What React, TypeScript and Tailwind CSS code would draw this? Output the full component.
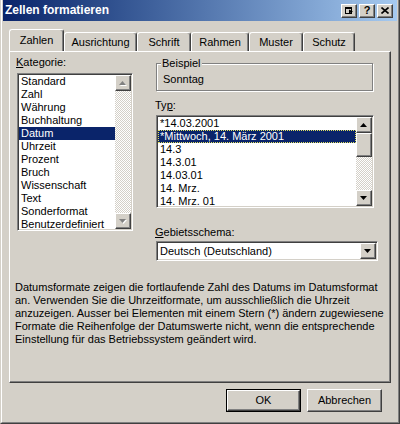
import React from "react";

const raised =
  "border border-t-white border-l-white border-r-[#404040] border-b-[#404040] shadow-[inset_-1px_-1px_0_#808080] bg-[#d4d0c8]";
const sunken =
  "border border-t-[#808080] border-l-[#808080] border-r-white border-b-white shadow-[inset_1px_1px_0_#404040,inset_-1px_-1px_0_#d4d0c8]";
const track =
  "bg-[image:repeating-conic-gradient(#ffffff_0_25%,#d4d0c8_0_50%)] bg-[length:2px_2px]";

function Arrow({ up, disabled }: { up?: boolean; disabled?: boolean }) {
  const pts = up ? "3.5,0 7,4 0,4" : "0,0 7,0 3.5,4";
  return (
    <svg width="8" height="5" viewBox="0 0 8 5" className="block">
      {disabled && <polygon points={pts} fill="#ffffff" transform="translate(1,1)" />}
      <polygon points={pts} fill={disabled ? "#808080" : "#000000"} />
    </svg>
  );
}

function ScrollBtn({ up, disabled }: { up?: boolean; disabled?: boolean }) {
  return (
    <div className={`${raised} w-[16px] h-[16px] flex items-center justify-center shrink-0`}>
      <Arrow up={up} disabled={disabled} />
    </div>
  );
}

const kategorien = [
  "Standard",
  "Zahl",
  "Währung",
  "Buchhaltung",
  "Datum",
  "Uhrzeit",
  "Prozent",
  "Bruch",
  "Wissenschaft",
  "Text",
  "Sonderformat",
  "Benutzerdefiniert",
];

const typen = [
  "*14.03.2001",
  "*Mittwoch, 14. März 2001",
  "14.3",
  "14.3.01",
  "14.03.01",
  "14. Mrz.",
  "14. Mrz. 01",
];

const tabs = [
  { name: "Zahlen", w: "w-[55px]" },
  { name: "Ausrichtung", w: "w-[73px]" },
  { name: "Schrift", w: "w-[54px]" },
  { name: "Rahmen", w: "w-[58px]" },
  { name: "Muster", w: "w-[54px]" },
  { name: "Schutz", w: "w-[52px]" },
];

export default function App() {
  return (
    <div className="w-[400px] h-[424px] bg-[#d4d0c8] font-['Liberation_Sans',Arial,sans-serif] text-[11px] leading-[13px] text-black flex flex-col border-l border-r border-b border-l-[#d4d0c8] border-r-[#404040] border-b-[#404040] overflow-hidden">
      <div className="flex-1 flex flex-col border-l border-r border-b border-l-white border-r-[#808080] border-b-[#808080] px-[1px]">
        {/* Title bar */}
        <div className="h-[21px] shrink-0 flex items-center bg-gradient-to-r from-[#0a246a] to-[#a6caf0] pl-[2px] pr-[4px]">
          <span className="font-bold text-white text-[12px] whitespace-nowrap">Zellen formatieren</span>
          <div className="ml-auto flex items-center">
            <div className={`${raised} w-[16px] h-[14px] flex items-center justify-center`}>
              <svg width="9" height="7" viewBox="0 0 9 7" className="block">
                <rect x="0.5" y="0.5" width="6" height="6" fill="none" stroke="#000" />
                <rect x="0.5" y="0.5" width="6" height="1.5" fill="#000" />
                <polygon points="4,2.5 8,4.5 4,6.5" fill="#000" />
              </svg>
            </div>
            <div className={`${raised} w-[16px] h-[14px] flex items-center justify-center ml-[2px] font-bold text-[11px] leading-[11px]`}>
              ?
            </div>
            <div className={`${raised} w-[16px] h-[14px] flex items-center justify-center ml-[2px]`}>
              <svg width="8" height="7" viewBox="0 0 8 7" className="block">
                <path d="M0.5 0.5 L7.5 6.5 M7.5 0.5 L0.5 6.5" stroke="#000" strokeWidth="1.6" />
              </svg>
            </div>
          </div>
        </div>

        {/* Tabs */}
        <div className="mt-[9px] ml-[6px] h-[21px] flex items-end relative z-10">
          {tabs.map((t, i) => (
            <div
              key={t.name}
              className={`${t.w} ${
                i === 0 ? "h-[22px] bg-[#d4d0c8] pb-[1px]" : "h-[19px] pt-[1px]"
              } flex items-center justify-center border-t border-l border-r border-t-white border-l-white border-r-[#404040] shadow-[inset_-1px_0_0_#808080] rounded-t-[3px] whitespace-nowrap`}
            >
              {t.name}
            </div>
          ))}
        </div>

        {/* Panel */}
        <div className="ml-[6px] w-[382px] h-[332px] shrink-0 border border-t-white border-l-white border-r-[#404040] border-b-[#404040] shadow-[inset_-1px_-1px_0_#808080] flex flex-col">
          <div className="flex pl-[7px]">
            {/* Left column */}
            <div className="w-[116px] pt-[4px] flex flex-col">
              <div className="h-[13px] -ml-[1px]">
                <span className="underline">K</span>ategorie:
              </div>
              <div className={`${sunken} bg-white mt-[4px] h-[158px] p-[1px] flex`}>
                <div className="flex-1 overflow-hidden">
                  {kategorien.map((k) => (
                    <div
                      key={k}
                      className={`h-[13px] pl-[2px] whitespace-nowrap ${
                        k === "Datum" ? "bg-[#0a246a] text-white" : ""
                      }`}
                    >
                      {k}
                    </div>
                  ))}
                </div>
                <div className="w-[16px] flex flex-col">
                  <ScrollBtn up disabled />
                  <div className={`flex-1 ${track}`} />
                  <ScrollBtn disabled />
                </div>
              </div>
            </div>

            {/* Right column */}
            <div className="ml-[22px] w-[224px] pt-[11px] flex flex-col">
              <div className="ml-[1px] w-[217px] h-[28px] relative border border-[#808080] shadow-[1px_1px_0_#ffffff,inset_1px_1px_0_#ffffff] flex items-center pl-[6px] pt-[4px]">
                <span className="absolute left-[4px] -top-[7px] px-[1px] bg-[#d4d0c8]">Beispiel</span>
                Sonntag
              </div>
              <div className="mt-[8px] h-[13px]">
                Ty<span className="underline">p</span>:
              </div>
              <div className={`${sunken} bg-white mt-[3px] ml-[1px] w-[218px] h-[93px] p-[1px] flex`}>
                <div className="flex-1 overflow-hidden">
                  {typen.map((t, i) => (
                    <div
                      key={t}
                      className={`h-[13px] pl-[2px] whitespace-nowrap ${
                        i === 1
                          ? "bg-[#0a246a] text-white outline outline-1 outline-dotted outline-offset-[-1px] outline-[#e0e060]"
                          : ""
                      }`}
                    >
                      {t}
                    </div>
                  ))}
                </div>
                <div className="w-[16px] flex flex-col">
                  <ScrollBtn up />
                  <div className={`${raised} h-[24px] shrink-0`} />
                  <div className={`flex-1 ${track}`} />
                  <ScrollBtn />
                </div>
              </div>
              <div className="mt-[18px] h-[13px]">
                <span className="underline">G</span>ebietsschema:
              </div>
              <div className={`${sunken} bg-white mt-[2px] ml-[1px] w-[222px] h-[20px] p-[1px] flex items-stretch`}>
                <div className="flex-1 flex items-center pl-[2px] whitespace-nowrap">Deutsch (Deutschland)</div>
                <ScrollBtn />
              </div>
            </div>
          </div>

          <div className="mt-[20px] pl-[5px] flex flex-col">
            <span className="whitespace-nowrap">Datumsformate zeigen die fortlaufende Zahl des Datums im Datumsformat</span>
            <span className="whitespace-nowrap">an. Verwenden Sie die Uhrzeitformate, um ausschließlich die Uhrzeit</span>
            <span className="whitespace-nowrap">anzuzeigen. Ausser bei Elementen mit einem Stern (*) ändern zugewiesene</span>
            <span className="whitespace-nowrap">Formate die Reihenfolge der Datumswerte nicht, wenn die entsprechende</span>
            <span className="whitespace-nowrap">Einstellung für das Betriebssystem geändert wird.</span>
          </div>
        </div>

        {/* Buttons */}
        <div className="mt-[6px] mr-[15px] flex justify-end gap-[6px]">
          <div className="w-[75px] h-[23px] border border-black">
            <div className={`${raised} w-full h-full flex items-center justify-center`}>OK</div>
          </div>
          <div className={`${raised} w-[75px] h-[23px] flex items-center justify-center`}>Abbrechen</div>
        </div>
      </div>
    </div>
  );
}
